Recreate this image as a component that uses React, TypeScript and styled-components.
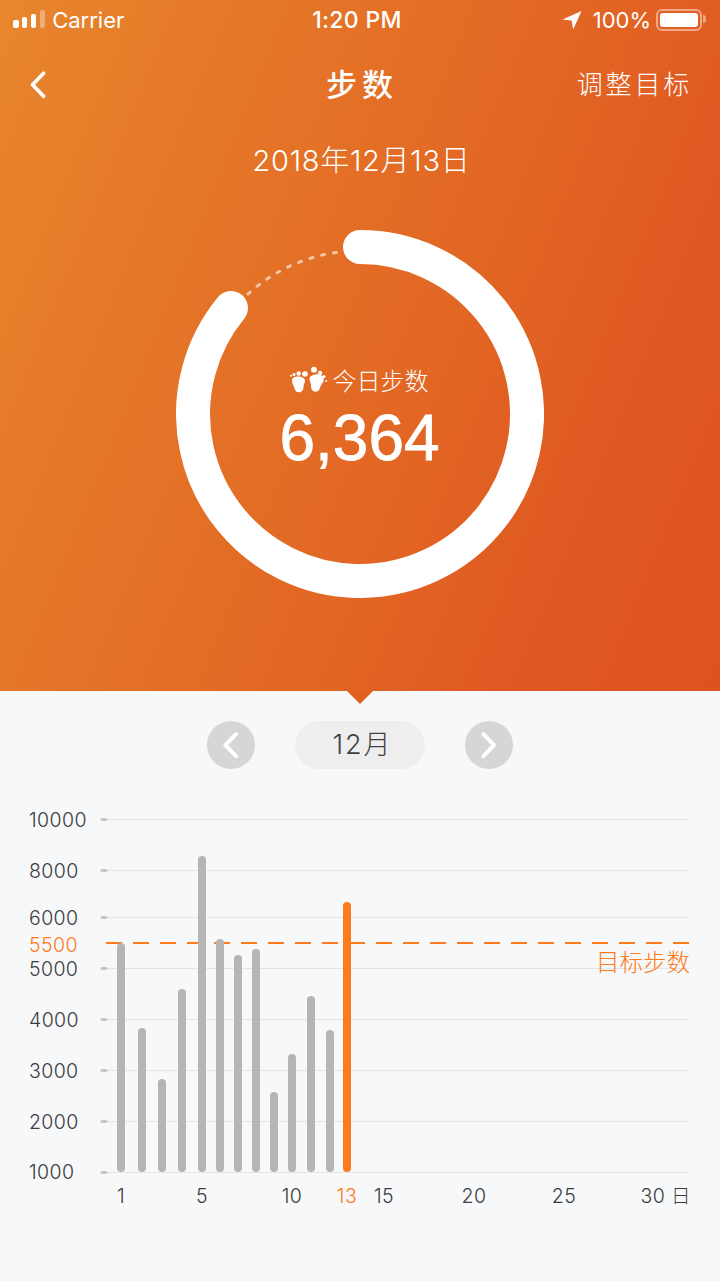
import React from 'react'
import styled, { createGlobalStyle } from 'styled-components'

const CJK = `"Noto Sans CJK SC"`
const ORANGE = '#ff7a1a'

const GlobalStyle = createGlobalStyle`
html,body{
  margin: 0;
  padding: 0;
  background: #f7f8fa;
}
body{
  font-family: "Liberation Sans", ${CJK}, sans-serif;
}
`
const Page = styled.div`
  width: 720px;
  height: 1281px;
  overflow: hidden;
  background: #f7f8fa;
`
const Hero = styled.header`
  position: relative;
  height: 691px;
  display: flex;
  flex-direction: column;
  color: white;
  background: linear-gradient(112deg, #e8862d 0%, #e57828 25%, #e26524 60%, #df5822 80%, #df5220 100%);
  &::after{
    content: '';
    position: absolute;
    left: 347px;
    bottom: -13px;
    border-left: 13px solid transparent;
    border-right: 13px solid transparent;
    border-top: 13px solid #e2601f;
  }
`
const StatusBar = styled.div`
  height: 40px;
  padding: 0 12px 0 13px;
  display: grid;
  grid-template-columns: 1fr auto 1fr;
  align-items: center;
  font-family: Inter, sans-serif;
  font-size: 22px;
`
const StatusLeft = styled.div`
  display: flex;
  align-items: center;
  gap: 7px;
`
const Time = styled.div`
  margin-right: 7px;
  font-weight: 500;
  font-size: 23px;
  letter-spacing: .3px;
`
const StatusRight = styled.div`
  display: flex;
  align-items: center;
  justify-content: flex-end;
  gap: 6px;
`
const Percent = styled.span`
  margin-left: 5px;
`
const Signal = styled.div`
  display: flex;
  align-items: flex-end;
  gap: 3.4px;
  height: 18px;
  margin-bottom: 2px;
`
const SignalBar = styled.span<{ $h: number; $off?: boolean }>`
  width: 5.5px;
  height: ${p => p.$h}px;
  border-radius: 2px;
  background: ${p => (p.$off ? 'rgba(255,255,255,.35)' : 'white')};
`
const Battery = styled.div`
  position: relative;
  width: 46px;
  height: 22px;
  margin-left: -1px;
  margin-right: 6px;
  padding: 2px;
  box-sizing: border-box;
  border: 2px solid rgba(255,255,255,.45);
  border-radius: 6px;
  &::before{
    content: '';
    display: block;
    height: 100%;
    border-radius: 3px;
    background: white;
  }
  &::after{
    content: '';
    position: absolute;
    right: -6px;
    top: 4px;
    width: 3px;
    height: 8px;
    border-radius: 0 3px 3px 0;
    background: rgba(255,255,255,.45);
  }
`
const Nav = styled.nav`
  height: 90px;
  padding: 0 30px;
  display: grid;
  grid-template-columns: 1fr auto 1fr;
  align-items: center;
`
const NavTitle = styled.h1`
  margin: 0 -4px 6px 0;
  font-family: ${CJK}, sans-serif;
  font-size: 31px;
  font-weight: 500;
  letter-spacing: 5px;
`
const NavAction = styled.div`
  justify-self: end;
  margin: 0 -2px 6px 0;
  font-family: ${CJK}, sans-serif;
  font-size: 26px;
  font-weight: 300;
  letter-spacing: 2.8px;
  white-space: nowrap;
`
const DateLine = styled.div`
  margin-top: 11px;
  padding-left: 3px;
  text-align: center;
  font-family: Inter, ${CJK}, sans-serif;
  font-size: 29px;
  font-weight: 300;
  line-height: 40px;
  letter-spacing: .7px;
`
const RingWrap = styled.div`
  position: relative;
  width: 368px;
  height: 368px;
  margin: 49px auto 0;
`
const RingCaption = styled.div`
  position: absolute;
  left: 0;
  right: 0;
  top: 133px;
  display: flex;
  flex-direction: column;
  align-items: center;
`
const TodayLabel = styled.div`
  height: 32px;
  display: flex;
  align-items: center;
  gap: 5px;
  margin-left: -2px;
  font-family: ${CJK}, sans-serif;
  font-size: 24px;
  font-weight: 300;
`
const Total = styled.div`
  margin: 8px 0 0 -1px;
  font-family: "Liberation Sans", sans-serif;
  font-size: 64px;
  line-height: 70px;
  -webkit-text-stroke: .8px white;
`
const MonthBar = styled.div`
  margin-top: 30px;
  display: flex;
  justify-content: center;
  gap: 40px;
`
const RoundButton = styled.button`
  width: 48px;
  height: 48px;
  padding: 0;
  border: 0;
  border-radius: 50%;
  background: #d6d6d6;
  display: flex;
  align-items: center;
  justify-content: center;
`
const MonthPill = styled.div`
  width: 130px;
  height: 48px;
  padding-left: 5px;
  box-sizing: border-box;
  border-radius: 24px;
  background: #eeeeee;
  color: #3f3f3f;
  font-family: Inter, ${CJK}, sans-serif;
  font-size: 27px;
  font-weight: 300;
  line-height: 48px;
  text-align: center;
  letter-spacing: 2px;
`
const ChartSvg = styled.svg`
  display: block;
  margin-top: 31px;
`
const AxisText = styled.text<{ $accent?: boolean }>`
  font-family: Inter, ${CJK}, sans-serif;
  font-size: 19.5px;
  font-weight: 300;
  letter-spacing: .4px;
  fill: ${p => (p.$accent ? ORANGE : '#3c3c3c')};
`
const GoalText = styled.text`
  font-family: ${CJK}, sans-serif;
  font-size: 23.5px;
  font-weight: 300;
  fill: ${ORANGE};
`

const grid = [
  { label: '10000', line: 819.5, base: 827 },
  { label: '8000', line: 870.5, base: 878 },
  { label: '6000', line: 917.5, base: 925 },
  { label: '5000', line: 968.5, base: 975.5 },
  { label: '4000', line: 1019.5, base: 1026.5 },
  { label: '3000', line: 1070.5, base: 1078 },
  { label: '2000', line: 1121.5, base: 1129 },
  { label: '1000', line: 1172.5, base: 1178.5 },
]
const bars = [
  { x: 121, top: 943 },
  { x: 142, top: 1028 },
  { x: 162, top: 1079 },
  { x: 182, top: 989 },
  { x: 202, top: 856 },
  { x: 220, top: 939 },
  { x: 238, top: 955 },
  { x: 256, top: 949 },
  { x: 274, top: 1092 },
  { x: 292, top: 1054 },
  { x: 311, top: 996 },
  { x: 330, top: 1030 },
  { x: 347, top: 902 },
]
const days = [
  { label: '1', x: 121 },
  { label: '5', x: 202 },
  { label: '10', x: 292 },
  { label: '13', x: 347, accent: true },
  { label: '15', x: 384 },
  { label: '20', x: 474 },
  { label: '25', x: 564 },
]

const Chevron = ({ dir, size = 22, width = 3.6 }: { dir: 'left' | 'right'; size?: number; width?: number }) => (
  <svg width={size * 0.7} height={size * 1.2} viewBox="0 0 14 24" fill="none">
    <path
      d={dir === 'left' ? 'M11.8 2 L2.2 12 L11.8 22' : 'M2.2 2 L11.8 12 L2.2 22'}
      stroke="white"
      strokeWidth={width}
      strokeLinecap="round"
      strokeLinejoin="round"
    />
  </svg>
)

const Feet = () => (
  <svg width="38" height="27" viewBox="0 0 38 27" fill="white">
    <path d="M2 14.5C2 11 6 10 9.5 10.5C13 11 15.5 13 15 15.5C14.5 17.5 13.5 18.5 13.5 21.5C13.5 24.8 11 26.5 8.5 26.3C5.5 26 4.8 23.5 4.2 21.5C3.5 19 2 17.5 2 14.5Z" />
    <circle cx="15" cy="8" r="2.8" />
    <circle cx="8.7" cy="7.5" r="2.2" />
    <circle cx="4" cy="8.4" r="1.5" />
    <circle cx="1" cy="9.8" r="1" />
    <path d="M33.8 13C33.8 9.5 29.5 8 25.5 8.4C21.5 8.8 19 11 19.5 13.5C20 15.5 21 17 21 20C21 23.5 23 25.8 25.7 25.7C28.7 25.5 29.7 23 30.5 20.5C31.3 18 33.8 16.5 33.8 13Z" />
    <circle cx="24" cy="3.7" r="2.9" />
    <circle cx="30" cy="7" r="2.2" />
    <circle cx="34" cy="10.4" r="1.5" />
    <circle cx="36.2" cy="15" r="1" />
  </svg>
)

const Ring = () => (
  <svg width="368" height="368" viewBox="0 0 368 368" fill="none">
    <path
      d="M184 17 A167 167 0 1 1 55 78"
      stroke="white"
      strokeWidth="34"
      strokeLinecap="round"
    />
    <path
      d="M72 64 A164 164 0 0 1 164 22"
      stroke="white"
      strokeOpacity=".6"
      strokeWidth="3"
      strokeLinecap="round"
      strokeDasharray="3 9"
    />
  </svg>
)

const App = () => {
  return (
    <Page>
      <GlobalStyle />
      <Hero>
        <StatusBar>
          <StatusLeft>
            <Signal>
              <SignalBar $h={8} />
              <SignalBar $h={11} />
              <SignalBar $h={14} />
              <SignalBar $h={18} $off />
            </Signal>
            Carrier
          </StatusLeft>
          <Time>1:20 PM</Time>
          <StatusRight>
            <svg width="20" height="20" viewBox="0 0 20 20" fill="white">
              <path d="M19.5 1 L0.5 9.6 L9.6 10.6 L11.2 19.5 Z" />
            </svg>
            <Percent>100%</Percent>
            <Battery />
          </StatusRight>
        </StatusBar>
        <Nav>
          <Chevron dir="left" size={23} width={3.2} />
          <NavTitle>步数</NavTitle>
          <NavAction>调整目标</NavAction>
        </Nav>
        <DateLine>2018年12月13日</DateLine>
        <RingWrap>
          <Ring />
          <RingCaption>
            <TodayLabel>
              <Feet />
              今日步数
            </TodayLabel>
            <Total>6,364</Total>
          </RingCaption>
        </RingWrap>
      </Hero>
      <MonthBar>
        <RoundButton><Chevron dir="left" /></RoundButton>
        <MonthPill>12月</MonthPill>
        <RoundButton><Chevron dir="right" /></RoundButton>
      </MonthBar>
      <ChartSvg width="720" height="481" viewBox="0 800 720 481">
        {grid.map(g => (
          <g key={g.label}>
            <line x1="107" x2="689" y1={g.line} y2={g.line} stroke="#e3e4e6" />
            <line x1="102" x2="106" y1={g.line} y2={g.line} stroke="#c6c6c6" strokeWidth="3" strokeLinecap="round" />
            <AxisText x="29" y={g.base}>{g.label}</AxisText>
          </g>
        ))}
        <AxisText x="29" y="952" $accent>5500</AxisText>
        <line x1="106" x2="689" y1="943" y2="943" stroke={ORANGE} strokeWidth="2" strokeDasharray="16 11" />
        <GoalText x="596" y="971">目标步数</GoalText>
        {bars.map((b, i) => (
          <rect
            key={b.x}
            x={b.x - 4}
            y={b.top}
            width="8"
            height={1172 - b.top}
            rx="4"
            fill={i === bars.length - 1 ? ORANGE : '#b5b5b5'}
          />
        ))}
        {days.map(d => (
          <AxisText key={d.label} x={d.x} y="1203" textAnchor="middle" $accent={d.accent}>{d.label}</AxisText>
        ))}
        <AxisText x="691" y="1203" textAnchor="end">30 日</AxisText>
      </ChartSvg>
    </Page>
  )
}

export default App
